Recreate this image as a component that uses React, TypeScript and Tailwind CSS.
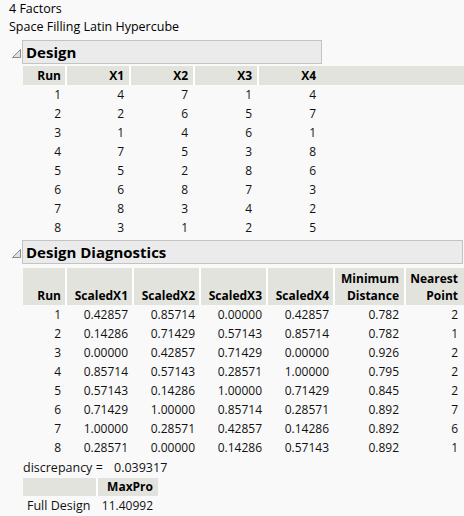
import { type FC, type ReactNode } from "react";

const design = [
  [1, 4, 7, 1, 4],
  [2, 2, 6, 5, 7],
  [3, 1, 4, 6, 1],
  [4, 7, 5, 3, 8],
  [5, 5, 2, 8, 6],
  [6, 6, 8, 7, 3],
  [7, 8, 3, 4, 2],
  [8, 3, 1, 2, 5],
];

const diagnostics = [
  ["1", "0.42857", "0.85714", "0.00000", "0.42857", "0.782", "2"],
  ["2", "0.14286", "0.71429", "0.57143", "0.85714", "0.782", "1"],
  ["3", "0.00000", "0.42857", "0.71429", "0.00000", "0.926", "2"],
  ["4", "0.85714", "0.57143", "0.28571", "1.00000", "0.795", "2"],
  ["5", "0.57143", "0.14286", "1.00000", "0.71429", "0.845", "2"],
  ["6", "0.71429", "1.00000", "0.85714", "0.28571", "0.892", "7"],
  ["7", "1.00000", "0.28571", "0.42857", "0.14286", "0.892", "6"],
  ["8", "0.28571", "0.00000", "0.14286", "0.57143", "0.892", "1"],
];

const designCols = ["w-[42px] pr-[4px]", "w-[64px] pr-[5px]", "w-[64px] pr-[5px]", "w-[64px] pr-[5px]", "w-[64px] pr-[5px]"];
const diagCols = [
  "w-[42px] pr-[4px]",
  "w-[67px] pr-[4px]",
  "w-[67px] pr-[4px]",
  "w-[67px] pr-[4px]",
  "w-[67px] pr-[4px]",
  "w-[71px] pr-[5px]",
  "w-[57px] pr-[3px]",
];

const OutlineHeader: FC<{ title: string; width: string; children: ReactNode }> = ({ title, width, children }) => (
  <div className="flex flex-col">
    <div className="flex items-center">
      <svg width="9" height="9" viewBox="0 0 9 9" className="ml-[12px] mt-[2px]">
        <path d="M0.5 8.5 L8.5 8.5 L8.5 0.5 Z" fill="#e2e2e2" stroke="#8a8a8a" strokeWidth="1" />
      </svg>
      <div
        className={`ml-[1px] h-[24px] ${width} border border-[#c3c3c3] bg-[#ebebeb] pl-[3px] flex items-center text-[15px] font-bold text-black`}
      >
        {title}
      </div>
    </div>
    <div className="ml-[23px]">{children}</div>
  </div>
);

const App: FC = () => {
  return (
    <div className="w-[464px] h-[516px] bg-[#f9f9f9] text-[12px] leading-[18px] text-[#111] font-['Open_Sans','Liberation_Sans',sans-serif] overflow-hidden">
      <div className="pl-[9px] text-black text-[12.5px]">4 Factors</div>
      <div className="pl-[9px] text-black text-[12.5px]">Space Filling Latin Hypercube</div>

      <div className="mt-[4px]">
        <OutlineHeader title="Design" width="w-[300px]">
          <div className="mt-[2px] flex bg-[#e3e3de] h-[19px] font-bold text-black">
            {["Run", "X1", "X2", "X3", "X4"].map((h, i) => (
              <div key={h} className={`${designCols[i]} text-right leading-[19px] ${i > 0 ? "border-l-2 border-white" : ""}`}>
                {h}
              </div>
            ))}
          </div>
          {design.map((row) => (
            <div key={row[0]} className="flex h-[19px] leading-[19px]">
              {row.map((v, i) => (
                <div key={i} className={`${designCols[i]} text-right ${i > 0 ? "border-l-2 border-transparent" : ""}`}>
                  {v}
                </div>
              ))}
            </div>
          ))}
        </OutlineHeader>
      </div>

      <div className="mt-[3px]">
        <OutlineHeader title="Design Diagnostics" width="w-[441px]">
          <div className="mt-[4px] flex bg-[#e3e3de] h-[37px] font-bold text-black leading-[17px]">
            {[
              ["", "Run"],
              ["", "ScaledX1"],
              ["", "ScaledX2"],
              ["", "ScaledX3"],
              ["", "ScaledX4"],
              ["Minimum", "Distance"],
              ["Nearest", "Point"],
            ].map(([a, b], i) => (
              <div
                key={b}
                className={`${diagCols[i]} flex flex-col justify-end items-end pb-[1px] ${i > 0 ? "border-l-2 border-white" : ""}`}
              >
                {a && <span>{a}</span>}
                <span>{b}</span>
              </div>
            ))}
          </div>
          {diagnostics.map((row) => (
            <div key={row[0]} className="flex h-[19px] leading-[19px]">
              {row.map((v, i) => (
                <div key={i} className={`${diagCols[i]} text-right ${i > 0 ? "border-l-2 border-transparent" : ""}`}>
                  {v}
                </div>
              ))}
            </div>
          ))}
          <div className="flex h-[19px] leading-[19px] mt-[1px] text-[12.5px]">
            <span className="w-[91px]">discrepancy =</span>
            <span>0.039317</span>
          </div>
          <div className="flex h-[18px] leading-[18px] mt-[1px] bg-[#e3e3de] w-[135px] font-bold text-black">
            <div className="w-[73px]" />
            <div className="w-[62px] text-right pr-[5px] border-l-2 border-white">MaxPro</div>
          </div>
          <div className="flex h-[19px] leading-[19px]">
            <div className="w-[73px] pl-[4px] text-[12.5px]">Full Design</div>
            <div className="w-[62px] text-right pr-[5px]">11.40992</div>
          </div>
        </OutlineHeader>
      </div>
    </div>
  );
};

export default App;
